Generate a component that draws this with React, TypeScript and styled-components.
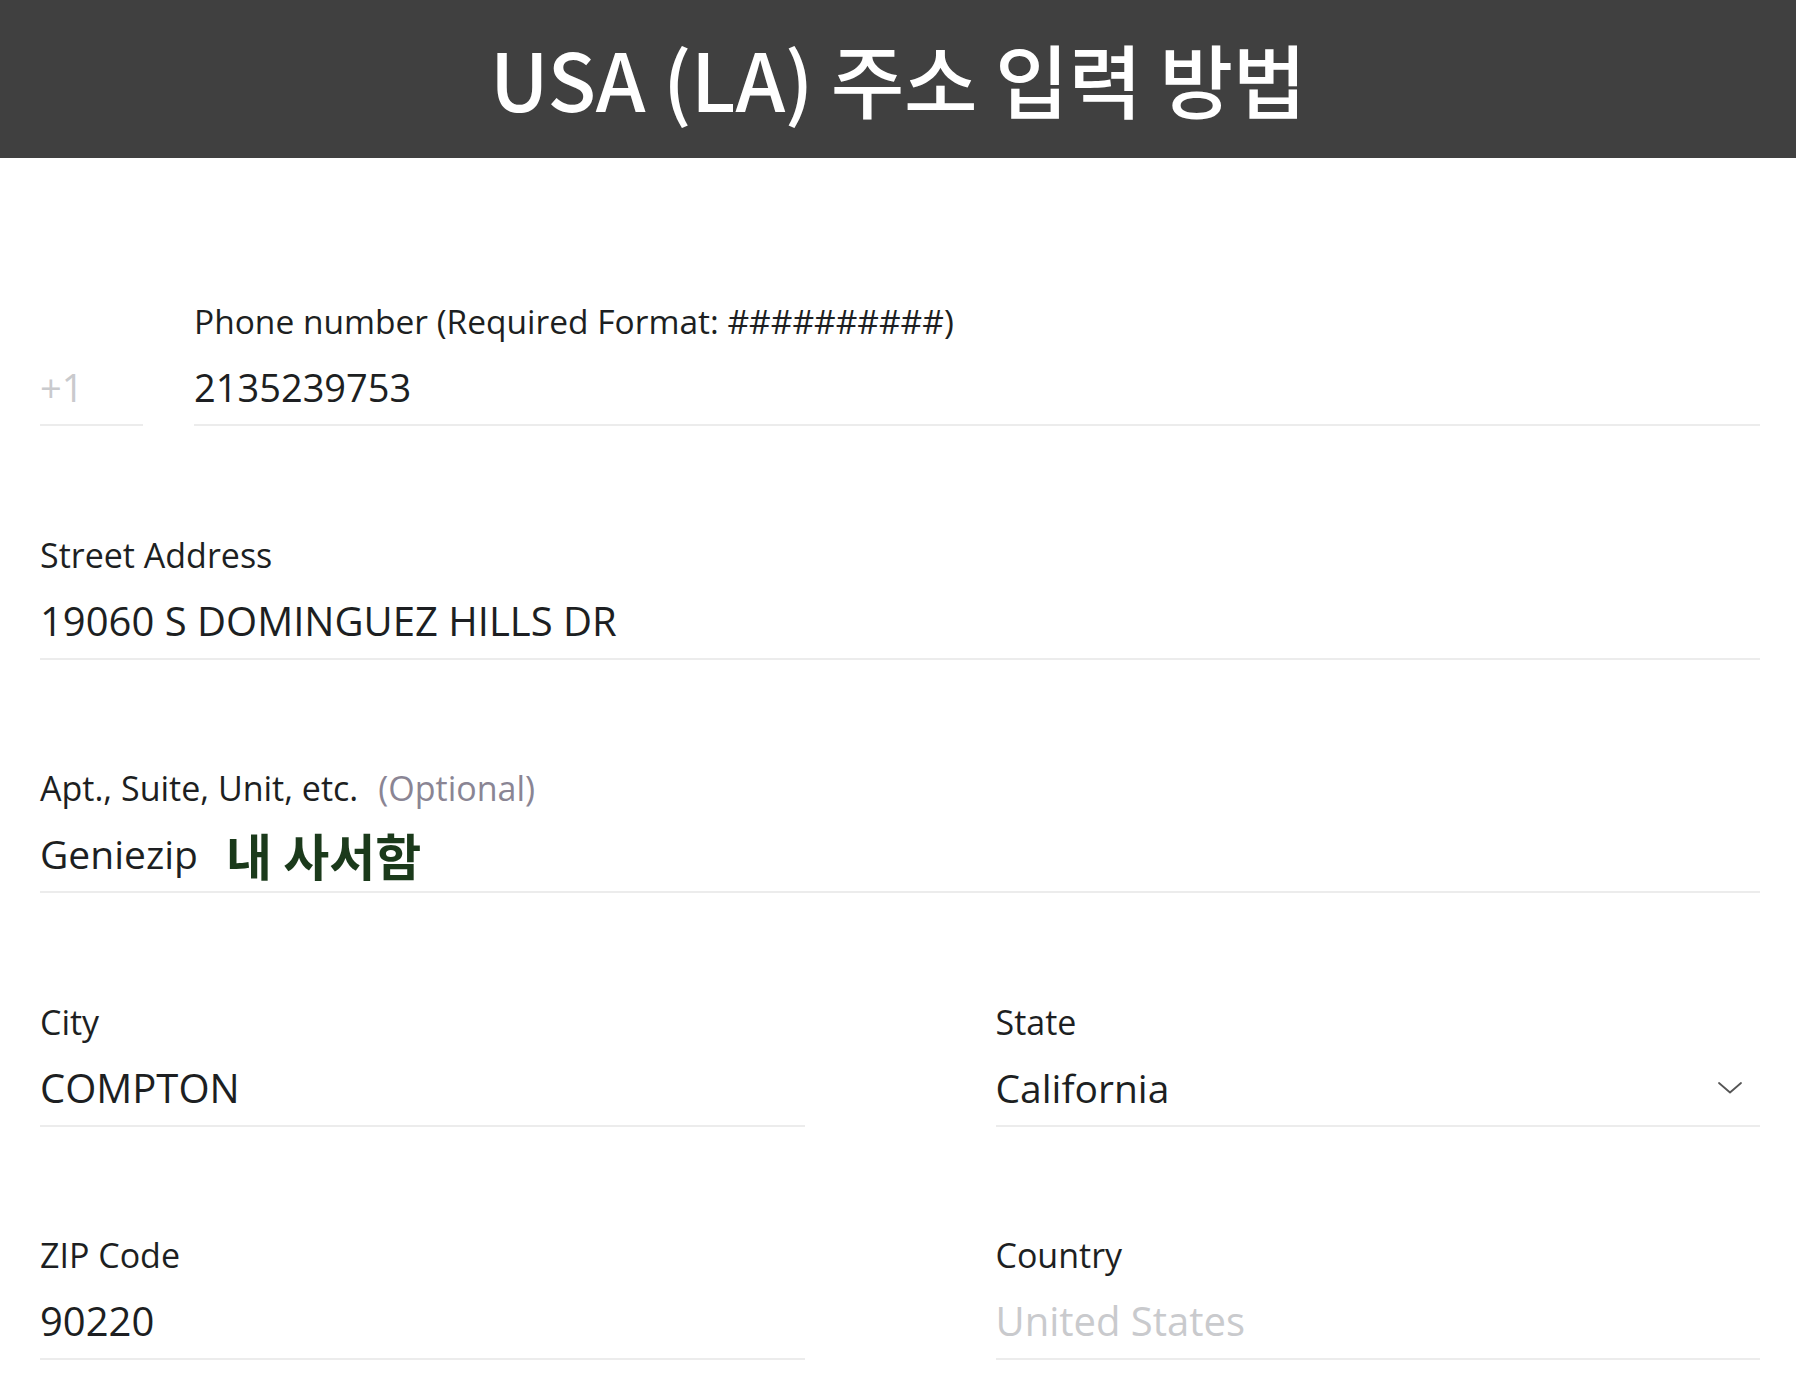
import React from "react";
import styled, { createGlobalStyle } from "styled-components";

const GlobalStyle = createGlobalStyle`
  html, body { margin: 0; padding: 0; background: #ffffff; }
  body { font-family: "Open Sans", "Noto Sans", Arial, sans-serif; }
  * { box-sizing: border-box; }
`;

const Page = styled.div`
  width: 1796px;
  min-height: 1388px;
  background: #ffffff;
  display: flex;
  flex-direction: column;
`;

const Header = styled.header`
  height: 158px;
  background: #404040;
  display: flex;
  align-items: center;
  justify-content: center;
`;

const Title = styled.h1`
  margin: 0;
  color: #ffffff;
  font-family: "Noto Sans CJK KR", "Noto Sans", sans-serif;
  font-weight: 500;
  font-size: 80px;
  line-height: 1;
  letter-spacing: -0.3px;
  padding-bottom: 4px;
`;

const Form = styled.main`
  display: flex;
  flex-direction: column;
  gap: 108.5px;
  padding: 143px 36px 28px 40px;
`;

const Row = styled.div<{ $cols: string; $gap: number }>`
  display: grid;
  grid-template-columns: ${(p) => p.$cols};
  column-gap: ${(p) => p.$gap}px;
  align-items: end;
`;

const Field = styled.div`
  display: flex;
  flex-direction: column;
  min-width: 0;
`;

const Label = styled.div<{ $size?: number }>`
  font-size: ${(p) => p.$size ?? 34}px;
  line-height: 40px;
  height: 40px;
  color: #1d1f22;
  white-space: nowrap;
  margin-bottom: 20px;
`;

const Optional = styled.span`
  color: #8a8594;
  margin-left: 20px;
`;

const Value = styled.div<{ $muted?: boolean; $size?: number }>`
  display: flex;
  align-items: center;
  font-size: ${(p) => p.$size ?? 40}px;
  line-height: 52px;
  height: 65px;
  padding-bottom: 11px;
  color: ${(p) => (p.$muted ? "#c9cacd" : "#1d1f22")};
  border-bottom: 2px solid #ececec;
  white-space: nowrap;
`;

const Highlight = styled.span`
  font-family: "Noto Sans CJK KR", "Noto Sans", sans-serif;
  font-weight: 700;
  font-size: 50px;
  color: #1b3a1b;
  margin-left: 28px;
  line-height: 52px;
`;

const SelectValue = styled(Value)`
  justify-content: space-between;
  padding-right: 18px;
`;

const Chevron = () => (
  <svg width="24" height="12" viewBox="0 0 24 12" fill="none">
    <path d="M1 1 L12 10.5 L23 1" stroke="#555" strokeWidth="1.8" strokeLinecap="round" strokeLinejoin="round" />
  </svg>
);

export default function App() {
  return (
    <>
      <GlobalStyle />
      <Page>
        <Header>
          <Title>USA (LA) 주소 입력 방법</Title>
        </Header>
        <Form>
          <Row $cols="103px 1fr" $gap={51}>
            <Field>
              <Value $muted $size={38}>+1</Value>
            </Field>
            <Field>
              <Label $size={33.5}>Phone number (Required Format: ##########)</Label>
              <Value $size={38}>2135239753</Value>
            </Field>
          </Row>
          <Field>
            <Label>Street Address</Label>
            <Value>19060 S DOMINGUEZ HILLS DR</Value>
          </Field>
          <Field>
            <Label>
              Apt., Suite, Unit, etc.<Optional>(Optional)</Optional>
            </Label>
            <Value $size={39}>
              Geniezip<Highlight>내 사서함</Highlight>
            </Value>
          </Field>
          <Row $cols="1fr 1fr" $gap={191}>
            <Field>
              <Label>City</Label>
              <Value>COMPTON</Value>
            </Field>
            <Field>
              <Label>State</Label>
              <SelectValue $size={39}>
                <span>California</span>
                <Chevron />
              </SelectValue>
            </Field>
          </Row>
          <Row $cols="1fr 1fr" $gap={191}>
            <Field>
              <Label>ZIP Code</Label>
              <Value>90220</Value>
            </Field>
            <Field>
              <Label>Country</Label>
              <Value $muted>United States</Value>
            </Field>
          </Row>
        </Form>
      </Page>
    </>
  );
}
